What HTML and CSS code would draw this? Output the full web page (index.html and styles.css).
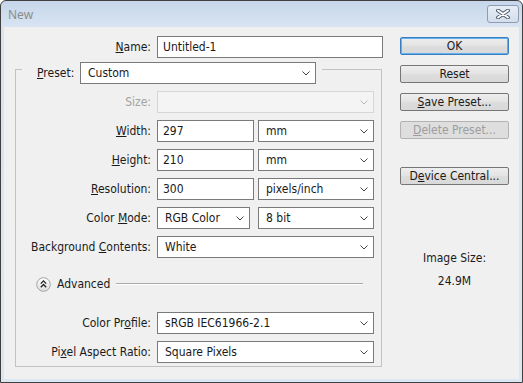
FILE: index.html
```html
<!DOCTYPE html>
<html>
<head>
<meta charset="utf-8">
<link rel="stylesheet" href="styles.css">
</head>
<body>
<div class="window">
  <div class="titlebar">
    <span class="title">New</span>
    <div class="close">
      <svg width="14" height="10" viewBox="0 0 14 10">
        <path d="M2 1.5 L12 8.5 M12 1.5 L2 8.5" stroke="#4a5566" stroke-width="3.8" stroke-linecap="round" fill="none"/>
        <path d="M2 1.5 L12 8.5 M12 1.5 L2 8.5" stroke="#ffffff" stroke-width="2" stroke-linecap="round" fill="none"/>
      </svg>
    </div>
  </div>
  <div class="client">
    <div class="main">
      <div class="row name-row">
        <span class="lbl lbl-name"><u>N</u>ame:</span>
        <div class="field text w-name">Untitled-1</div>
      </div>
      <div class="group">
        <div class="group-head">
          <div class="seg seg-left"></div>
          <span class="preset-lbl"><u>P</u>reset:</span>
          <div class="field select w-preset"><span>Custom</span><svg class="chev" width="8" height="5" viewBox="0 0 8 5"><polyline points="0.5,0.5 4,4 7.5,0.5" fill="none" stroke="#444" stroke-width="1"/></svg></div>
          <div class="seg seg-right"></div>
        </div>
        <div class="group-body">
          <div class="row">
            <span class="lbl disabled">Size:</span>
            <div class="field select w-full is-disabled"><span></span><svg class="chev" width="8" height="5" viewBox="0 0 8 5"><polyline points="0.5,0.5 4,4 7.5,0.5" fill="none" stroke="#b8b8b8" stroke-width="1"/></svg></div>
          </div>
          <div class="row">
            <span class="lbl"><u>W</u>idth:</span>
            <div class="field text w-num">297</div>
            <div class="field select w-unit"><span>mm</span><svg class="chev" width="8" height="5" viewBox="0 0 8 5"><polyline points="0.5,0.5 4,4 7.5,0.5" fill="none" stroke="#444" stroke-width="1"/></svg></div>
          </div>
          <div class="row">
            <span class="lbl"><u>H</u>eight:</span>
            <div class="field text w-num">210</div>
            <div class="field select w-unit"><span>mm</span><svg class="chev" width="8" height="5" viewBox="0 0 8 5"><polyline points="0.5,0.5 4,4 7.5,0.5" fill="none" stroke="#444" stroke-width="1"/></svg></div>
          </div>
          <div class="row">
            <span class="lbl"><u>R</u>esolution:</span>
            <div class="field text w-num">300</div>
            <div class="field select w-unit"><span>pixels/inch</span><svg class="chev" width="8" height="5" viewBox="0 0 8 5"><polyline points="0.5,0.5 4,4 7.5,0.5" fill="none" stroke="#444" stroke-width="1"/></svg></div>
          </div>
          <div class="row">
            <span class="lbl">Color <u>M</u>ode:</span>
            <div class="field select w-mode"><span>RGB Color</span><svg class="chev" width="8" height="5" viewBox="0 0 8 5"><polyline points="0.5,0.5 4,4 7.5,0.5" fill="none" stroke="#444" stroke-width="1"/></svg></div>
            <div class="field select w-unit w-bit"><span>8 bit</span><svg class="chev" width="8" height="5" viewBox="0 0 8 5"><polyline points="0.5,0.5 4,4 7.5,0.5" fill="none" stroke="#444" stroke-width="1"/></svg></div>
          </div>
          <div class="row">
            <span class="lbl">Background <u>C</u>ontents:</span>
            <div class="field select w-full"><span>White</span><svg class="chev" width="8" height="5" viewBox="0 0 8 5"><polyline points="0.5,0.5 4,4 7.5,0.5" fill="none" stroke="#444" stroke-width="1"/></svg></div>
          </div>
          <div class="row advanced">
            <svg class="adv-icon" width="15" height="15" viewBox="0 0 15 15">
              <defs>
                <linearGradient id="g" x1="0" y1="0" x2="0" y2="1">
                  <stop offset="0" stop-color="#ffffff"/>
                  <stop offset="1" stop-color="#dcdcdc"/>
                </linearGradient>
              </defs>
              <circle cx="7.5" cy="7.5" r="6.8" fill="url(#g)" stroke="#a3a3a3" stroke-width="1"/>
              <polyline points="4.8,6.6 7.5,3.9 10.2,6.6" fill="none" stroke="#222" stroke-width="1.3"/>
              <polyline points="4.8,10.2 7.5,7.5 10.2,10.2" fill="none" stroke="#222" stroke-width="1.3"/>
            </svg>
            <span class="adv-text">Advanced</span>
            <div class="adv-line"></div>
          </div>
          <div class="row profile-row">
            <span class="lbl">Color Pr<u>o</u>file:</span>
            <div class="field select w-full"><span>sRGB IEC61966-2.1</span><svg class="chev" width="8" height="5" viewBox="0 0 8 5"><polyline points="0.5,0.5 4,4 7.5,0.5" fill="none" stroke="#444" stroke-width="1"/></svg></div>
          </div>
          <div class="row">
            <span class="lbl">Pi<u>x</u>el Aspect Ratio:</span>
            <div class="field select w-full"><span>Square Pixels</span><svg class="chev" width="8" height="5" viewBox="0 0 8 5"><polyline points="0.5,0.5 4,4 7.5,0.5" fill="none" stroke="#444" stroke-width="1"/></svg></div>
          </div>
        </div>
      </div>
    </div>
    <div class="side">
      <div class="btn btn-default">OK</div>
      <div class="btn">Reset</div>
      <div class="btn"><u>S</u>ave Preset...</div>
      <div class="btn btn-disabled"><u>D</u>elete Preset...</div>
      <div class="btn btn-device">D<u>e</u>vice Central...</div>
      <div class="img-size-label">Image Size:</div>
      <div class="img-size-value">24.9M</div>
    </div>
  </div>
</div>
</body>
</html>
```

FILE: styles.css
```css
* { box-sizing: border-box; }

html, body {
  margin: 0;
  padding: 0;
  background: #ffffff;
}

body {
  font-family: "DejaVu Sans", "Liberation Sans", sans-serif;
  font-stretch: condensed;
  font-size: 12px;
  color: #1a1a1a;
}

u { text-decoration: underline; text-underline-offset: 1px; }

.window {
  width: 523px;
  height: 383px;
  border: 1px solid #3f3f3f;
  border-radius: 6px 6px 0 0;
  background: linear-gradient(#c6d6ea 0, #d8e4f2 26px, #dce7f4 100%);
  display: flex;
  flex-direction: column;
  overflow: hidden;
}

.titlebar {
  height: 26px;
  flex: none;
  display: flex;
  align-items: flex-start;
  padding: 0 3px 0 7px;
}

.title {
  margin-top: 5px;
  font-family: "Noto Sans", "Open Sans", sans-serif;
  font-stretch: normal;
  font-size: 12px;
  line-height: 17px;
  color: #8c8c8c;
}

.close {
  margin-left: auto;
  margin-top: 4px;
  width: 32px;
  height: 18px;
  border: 1px solid #8e9bb0;
  border-radius: 3px;
  background: linear-gradient(#e6edf6, #d3deec);
  display: flex;
  align-items: center;
  justify-content: center;
}

.client {
  flex: 1;
  margin: 0 3px 3px;
  background: #f0f0f0;
  display: flex;
}

.main {
  width: 379px;
  flex: none;
  padding: 9px 0 0 11px;
}

.row {
  display: flex;
  align-items: center;
  height: 22px;
}

.lbl {
  width: 135px;
  flex: none;
  text-align: right;
  margin-right: 6px;
  white-space: nowrap;
}

.lbl-name { width: 136px; }

.disabled { color: #a3a3a3; }

.field {
  height: 22px;
  border: 1px solid #7a7a7a;
  background: #ffffff;
  display: flex;
  align-items: center;
  white-space: nowrap;
  flex: none;
}

.field.text { padding-left: 5px; }

.field.select {
  padding: 0 5px 0 7px;
  justify-content: space-between;
}

.field.is-disabled {
  background: #f4f4f4;
  border-color: #d6d6d6;
}

.chev { flex: none; }

.w-name { width: 226px; }
.w-preset { width: 236px; }
.w-full { width: 217px; }
.w-num { width: 97px; }
.w-unit { width: 116px; margin-left: 4px; }
.w-mode { width: 93px; }
.w-bit { margin-left: 8px; }

.group {
  margin-top: 4px;
  width: 367px;
}

.group-head {
  display: flex;
  height: 22px;
}

.seg {
  margin-top: 7px;
  border-top: 1px solid #c2c2c2;
}

.seg-left {
  width: 7px;
  flex: none;
  border-left: 1px solid #c2c2c2;
}

.seg-right {
  flex: 1;
  margin-left: 6px;
  border-right: 1px solid #c2c2c2;
}

.preset-lbl {
  margin-left: 15px;
  width: 43px;
  flex: none;
  align-self: center;
}

.group-body {
  border: 1px solid #c2c2c2;
  border-top: none;
  padding: 7px 0 3px 0;
  display: flex;
  flex-direction: column;
  gap: 7px;
}

.advanced {
  margin-top: 8px;
  margin-bottom: 10px;
}

.adv-icon {
  margin-left: 20px;
  flex: none;
}

.adv-text {
  margin-left: 6px;
}

.adv-line {
  flex: 1;
  margin: 0 18px 0 6px;
  height: 2px;
  border-top: 1px solid #a9a9a9;
  border-bottom: 1px solid #ffffff;
}

.side {
  margin-left: 17px;
  width: 109px;
  flex: none;
  padding-top: 10px;
  display: flex;
  flex-direction: column;
}

.btn {
  height: 18px;
  border: 1px solid #767676;
  border-radius: 2px;
  background: linear-gradient(#eeeeee, #e3e3e3 50%, #dddddd 51%, #d9d9d9);
  display: flex;
  align-items: center;
  justify-content: center;
  margin-bottom: 10px;
  white-space: nowrap;
}

.btn-default {
  border-color: #3a7fc0;
  box-shadow: inset 0 0 0 1px #5fb0ec;
}

.btn-disabled {
  color: #9d9d9d;
  border-color: #b3b3b3;
  background: #dedede;
}

.btn-device {
  margin-top: 18px;
}

.img-size-label {
  margin-top: 56px;
  text-align: center;
  line-height: 15px;
}

.img-size-value {
  margin-top: 8px;
  text-align: center;
  line-height: 15px;
}
```
